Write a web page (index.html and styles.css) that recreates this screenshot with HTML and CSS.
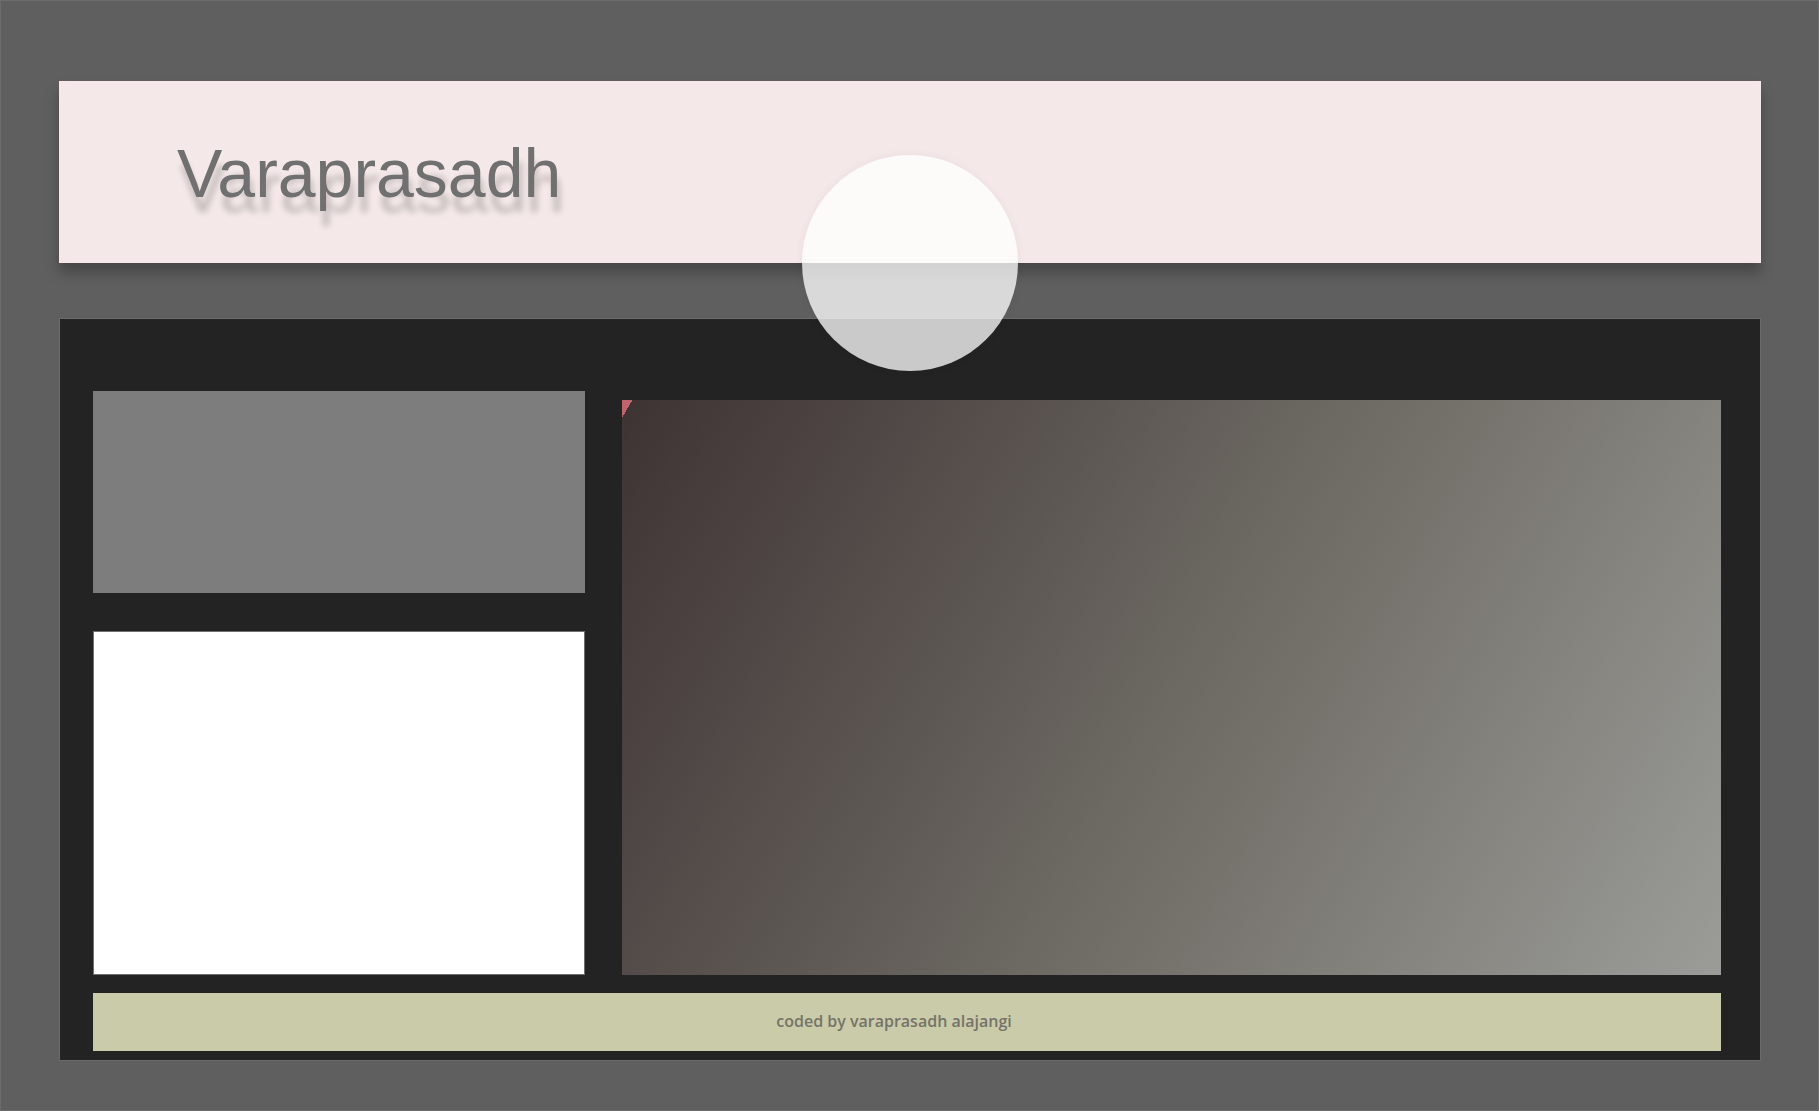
FILE: index.html
```html
<!DOCTYPE html>
<html lang="en">
<head>
    <meta charset="UTF-8">
    <meta name="viewport" content="width=device-width, initial-scale=1.0">
    <title>Varaprasadh</title>
    <link rel="stylesheet" href="styles.css">
</head>
<body>
    <div class="page">
        <header class="header">
            <h1 class="title">Varaprasadh</h1>
            <div class="avatar"></div>
        </header>
        <main class="main">
            <div class="row">
                <div class="side">
                    <div class="box-grey"></div>
                    <div class="box-white"></div>
                </div>
                <div class="showcase"></div>
            </div>
            <footer class="footer">coded by varaprasadh alajangi</footer>
        </main>
    </div>
</body>
</html>
```

FILE: styles.css
```css
* {
    box-sizing: border-box;
}

body {
    margin: 0;
    padding: 0;
    background-color: #5f5f5f;
    font-family: "Liberation Sans", Arial, sans-serif;
}

.page {
    height: 1111px;
    border: 1px solid #6c6c6c;
    padding: 80px 57px 0 58px;
    display: flex;
    flex-direction: column;
}

.header {
    position: relative;
    height: 182px;
    background-color: #f4e8e8;
    box-shadow: 0 10px 12px rgba(0, 0, 0, 0.25);
    padding: 58px 0 0 118px;
    z-index: 2;
}

.title {
    margin: 0;
    font-size: 68px;
    font-weight: normal;
    line-height: 1;
    color: #707070;
    text-shadow: 3px 15px 6px rgba(0, 0, 0, 0.2);
}

.avatar {
    position: absolute;
    left: 50%;
    top: calc(100% - 108px);
    width: 216px;
    height: 216px;
    margin-left: -108px;
    border-radius: 50%;
    background-color: rgba(255, 255, 255, 0.76);
    box-shadow: 0 0 10px rgba(0, 0, 0, 0.05);
}

.main {
    margin-top: 55px;
    height: 743px;
    background-color: #232323;
    border: 1px solid #6b6b6b;
    padding: 72px 39px 9px 33px;
    display: flex;
    flex-direction: column;
}

.row {
    display: flex;
    gap: 37px;
    height: 584px;
}

.side {
    width: 492px;
    display: flex;
    flex-direction: column;
    gap: 38px;
}

.box-grey {
    height: 202px;
    background-color: #7d7d7d;
}

.box-white {
    flex: 1;
    background-color: #ffffff;
    border: 1px solid #6f6f6f;
}

.showcase {
    flex: 1;
    margin-top: 9px;
    background: linear-gradient(120deg, #c0646e 9px, #3e3434 9px, #6c6862 50%, #9b9c98 100%);
}

.footer {
    margin-top: 18px;
    height: 58px;
    background-color: #cacba8;
    color: #74746a;
    font-family: "Open Sans", "Noto Sans", sans-serif;
    font-size: 16px;
    font-weight: 600;
    display: flex;
    align-items: center;
    justify-content: center;
    padding-right: 26px;
    padding-bottom: 2px;
}
```
